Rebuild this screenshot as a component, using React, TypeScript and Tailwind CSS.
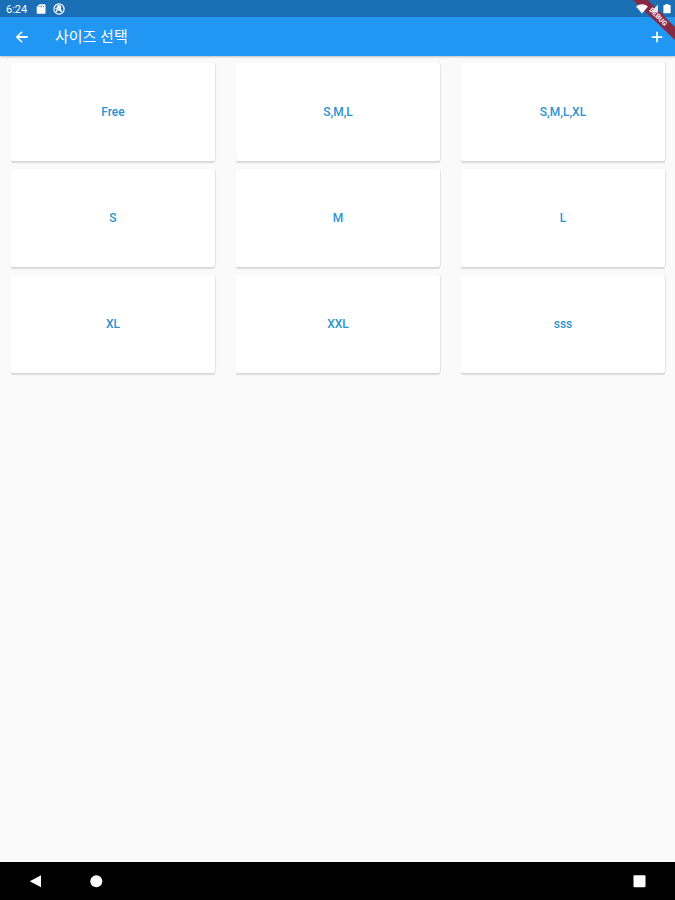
import { useState } from "react";

const initialSizes = ["Free", "S,M,L", "S,M,L,XL", "S", "M", "L", "XL", "XXL", "sss"];

const StatusBar = () => (
  <div className="flex h-[17px] items-center bg-[#1b6fb5] px-[6px] pt-px text-white">
    <span className="w-[30px] text-[11px] leading-none">6:24</span>
    <svg className="h-[10px] w-[10px]" viewBox="0 0 10 10" fill="currentColor" aria-hidden="true">
      <path d="M3.500 .3H8.700q.8 0 .8.8v7.800q0 .8-.8.8H1.500q-.8 0-.8-.8V3.100zM3.600 1.700v1.600h.8V1.700zM5.300 1.700v1.600h.8V1.700zM7 1.700v1.600h.8V1.700z" fillRule="evenodd" />
    </svg>
    <svg
      className="ml-[7px] h-[12px] w-[12px]"
      viewBox="0 0 12 12"
      fill="none"
      stroke="currentColor"
      strokeWidth="1.2"
      aria-hidden="true"
    >
      <circle cx="6" cy="6" r="5.1" />
      <path d="M3 9.3 5.8 3.6 9 9.2M2.4 5.2l6.3 3.2" />
      <circle cx="6" cy="4.4" r="1.7" />
    </svg>
  </div>
);

// Debug ribbon in the corner, with the system icons drawn over it
const CornerBanner = () => (
  <div className="pointer-events-none absolute top-0 right-0">
    <svg className="h-[42px] w-[45px]" viewBox="0 0 45 42">
      <path d="M3 0h15l27 27v13z" fill="#852a42" />
      <path d="M6 6.500q6-4.500 12 0L12 13.500z" fill="#fff" />
      <path d="M28 4.500v7.500h-7.500z" fill="#fff" fillOpacity=".85" />
      <path d="M34 5h1.500V4h3v1H40q.6 0 .6.600v7q0 .6-.6.600h-6q-.6 0-.6-.6v-7q0-.6.6-.6z" fill="#fff" />
      <text
        x="28"
        y="17"
        transform="rotate(45 28 17)"
        textAnchor="middle"
        dominantBaseline="central"
        fill="#f3dfe6"
        fontSize="7"
        fontWeight="900"
        fontFamily="Roboto, sans-serif"
      >
        DEBUG
      </text>
    </svg>
  </div>
);

const NavigationBar = () => (
  <nav className="flex h-[38px] items-center justify-between bg-black px-[29px] text-white">
    <div className="flex items-center gap-[48px]">
      <button type="button" aria-label="Back">
        <svg className="block h-[13px] w-[13px]" viewBox="0 0 13 13" fill="currentColor">
          <path d="M.8 6.200 12 .2v12z" />
        </svg>
      </button>
      <button type="button" aria-label="Home">
        <svg className="block h-[13px] w-[13px]" viewBox="0 0 13 13" fill="currentColor">
          <circle cx="6.300" cy="6.300" r="6" />
        </svg>
      </button>
    </div>
    <button type="button" aria-label="Overview">
      <svg className="block h-[13px] w-[13px]" viewBox="0 0 13 13" fill="currentColor">
        <rect x=".5" y=".2" width="12" height="12" rx="1" />
      </svg>
    </button>
  </nav>
);

const App = () => {
  const [sizes, setSizes] = useState(initialSizes);

  return (
    <div className="relative flex min-h-screen flex-col bg-[#fafafa] font-['Roboto','Noto_Sans_CJK_KR',sans-serif]">
      <StatusBar />
      <header className="flex h-[39px] items-center bg-[#2196f3] pr-[11px] pl-[14px] text-white shadow-[0_1px_2px_rgba(0,0,0,0.25)]">
        <button type="button" aria-label="뒤로">
          <svg className="block h-[16px] w-[16px]" viewBox="0 0 24 24" fill="currentColor">
            <path d="M20.500 10.600H7.300l5.700-5.700L11.400 3.200 2.600 12l8.800 8.800 1.600-1.700-5.700-5.700h13.200z" />
          </svg>
        </button>
        <h1 className="ml-[25px] flex-1 text-[15px] leading-5">사이즈 선택</h1>
        <button type="button" aria-label="추가" onClick={() => setSizes((prev) => [...prev, "New"])}>
          <svg className="block h-[14px] w-[14px]" viewBox="0 0 14 14" fill="currentColor">
            <path d="M6.200 1.800h1.700v4.400h4.400v1.700H7.900v4.400H6.200V7.900H1.800V6.200h4.400z" />
          </svg>
        </button>
      </header>

      <main className="flex-1 pt-[7px] pr-[10px] pl-[11px]">
        <div className="grid grid-cols-3 gap-x-[21px] gap-y-2">
          {sizes.map((size, index) => (
            <button
              key={index}
              type="button"
              className="h-[98px] rounded-[2px] bg-white text-[12px] font-medium text-[#2b93cf] shadow-[0_2px_1px_rgba(0,0,0,0.13),1px_0_1px_rgba(0,0,0,0.08)]"
            >
              {size}
            </button>
          ))}
        </div>
      </main>

      <NavigationBar />
      <CornerBanner />
    </div>
  );
};

export default App;
